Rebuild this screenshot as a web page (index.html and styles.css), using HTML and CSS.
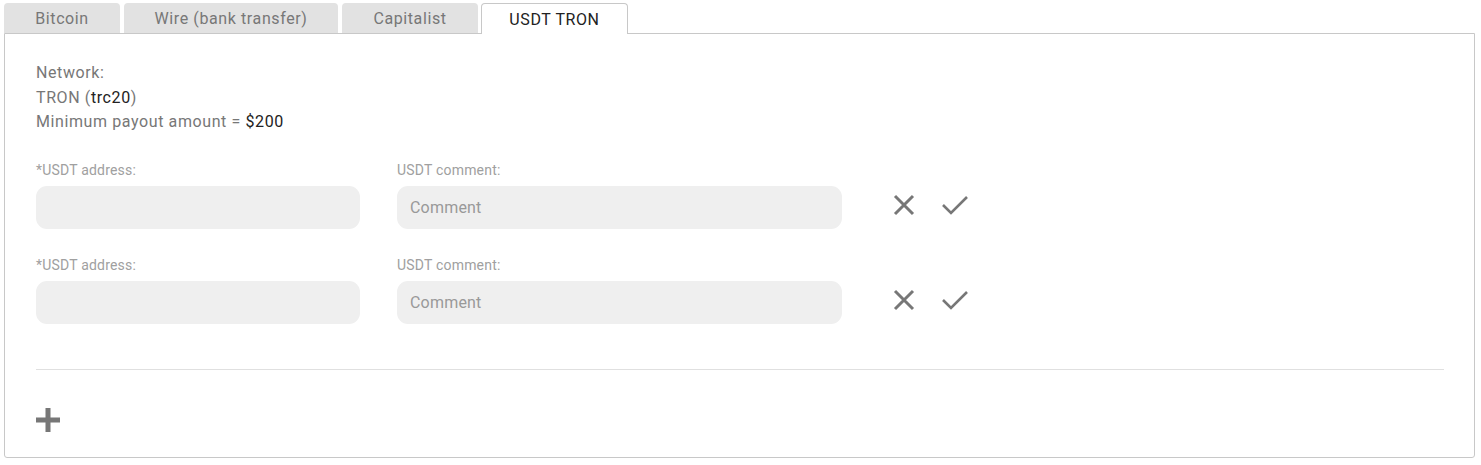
FILE: index.html
```html
<!DOCTYPE html>
<html>
<head>
<meta charset="utf-8">
<link rel="stylesheet" href="styles.css">
</head>
<body>
<div class="wrap">
  <div class="tabs">
    <div class="tab t1">Bitcoin</div>
    <div class="tab t2">Wire (bank transfer)</div>
    <div class="tab t3">Capitalist</div>
    <div class="tab t4 active">USDT TRON</div>
  </div>
  <div class="panel">
    <div class="info">
      <div>Network:</div>
      <div>TRON (<span class="val">trc20</span>)</div>
      <div>Minimum payout amount = <span class="val">$200</span></div>
    </div>
    <div class="row">
      <div class="field addr">
        <label>*USDT address:</label>
        <div class="input"></div>
      </div>
      <div class="field comment">
        <label>USDT comment:</label>
        <div class="input ph">Comment</div>
      </div>
      <div class="actions">
        <svg class="ico-x" width="22" height="22" viewBox="0 0 22 22"><path d="M2 2 L20 20 M20 2 L2 20" stroke="#777" stroke-width="3" fill="none"/></svg>
        <svg class="ico-ok" width="28" height="22" viewBox="0 0 28 22"><path d="M2 11 L10 19 L26 3" stroke="#777" stroke-width="2.6" fill="none"/></svg>
      </div>
    </div>
    <div class="row">
      <div class="field addr">
        <label>*USDT address:</label>
        <div class="input"></div>
      </div>
      <div class="field comment">
        <label>USDT comment:</label>
        <div class="input ph">Comment</div>
      </div>
      <div class="actions">
        <svg class="ico-x" width="22" height="22" viewBox="0 0 22 22"><path d="M2 2 L20 20 M20 2 L2 20" stroke="#777" stroke-width="3" fill="none"/></svg>
        <svg class="ico-ok" width="28" height="22" viewBox="0 0 28 22"><path d="M2 11 L10 19 L26 3" stroke="#777" stroke-width="2.6" fill="none"/></svg>
      </div>
    </div>
    <div class="sep"></div>
    <div class="add">
      <svg width="24" height="24" viewBox="0 0 24 24"><path d="M12 0 V24 M0 12 H24" stroke="#777" stroke-width="5" fill="none"/></svg>
    </div>
  </div>
</div>
</body>
</html>
```
FILE: styles.css
```css
html, body { margin: 0; padding: 0; background: #fff; }
body {
  font-family: "Roboto", "Liberation Sans", sans-serif;
  color: #777;
  letter-spacing: 0.6px;
}
.wrap { padding: 3px 6px 0 4px; }
.tabs { display: flex; gap: 4px; height: 30px; }
.tab {
  box-sizing: border-box;
  height: 30px;
  background: #e2e2e2;
  border-radius: 4px 4px 0 0;
  font-size: 16px;
  color: #777;
  display: flex;
  align-items: center;
  justify-content: center;
  padding-top: 1px;
}
.t1 { width: 116px; }
.t2 { width: 214px; }
.t3 { width: 136px; margin-right: -1px; }
.t4 { width: 147px; }
.tab.active {
  background: #fff;
  border: 1px solid #c8c8c8;
  border-bottom: none;
  color: #222;
  height: 31px;
  position: relative;
  z-index: 1;
}
.panel {
  box-sizing: border-box;
  height: 425px;
  border: 1px solid #c8c8c8;
  border-radius: 0 0 3px 3px;
  padding: 27px 30px 0 31px;
}
.info { font-size: 16px; line-height: 24.5px; color: #777; }
.info .val { color: #222; }
.row { display: flex; align-items: flex-end; margin-top: 27px; }
.row + .row { margin-top: 28px; }
.field { display: flex; flex-direction: column; }
.field label { font-size: 14px; color: #a0a0a0; line-height: 17px; margin-bottom: 7px; letter-spacing: 0.2px; }
.addr { width: 324px; margin-right: 37px; }
.comment { width: 445px; }
.input {
  height: 43px;
  border-radius: 11px;
  background: #efefef;
  box-sizing: border-box;
  padding: 0 13px;
  display: flex;
  align-items: center;
  font-size: 16px;
  color: #999;
  letter-spacing: 0.2px;
}
.actions { display: flex; align-items: center; height: 43px; margin-left: 51px; gap: 26px; padding-bottom: 4px; box-sizing: border-box; }
.actions svg { display: block; }
.sep { height: 1px; background: #e0e0e0; margin: 45px 0 0 0; }
.add { margin-top: 38px; }
.add svg { display: block; }
```
